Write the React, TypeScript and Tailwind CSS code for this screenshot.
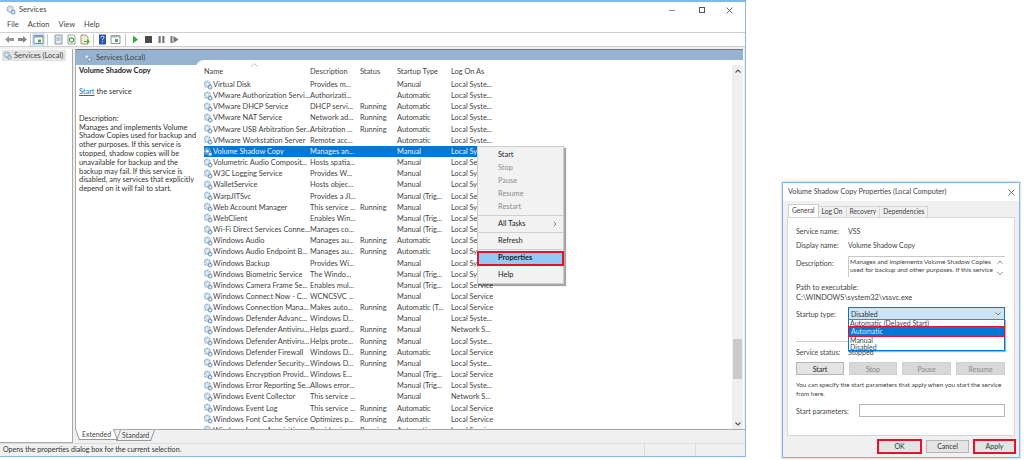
import React from "react";

const rows: [string, string, string, string, string][] = [
  ["Virtual Disk", "Provides m...", "", "Manual", "Local Syste..."],
  ["VMware Authorization Servi...", "Authorizati...", "", "Automatic", "Local Syste..."],
  ["VMware DHCP Service", "DHCP servi...", "Running", "Automatic", "Local Syste..."],
  ["VMware NAT Service", "Network ad...", "Running", "Automatic", "Local Syste..."],
  ["VMware USB Arbitration Ser...", "Arbitration ...", "Running", "Automatic", "Local Syste..."],
  ["VMware Workstation Server", "Remote acc...", "", "Automatic", "Local Syste..."],
  ["Volume Shadow Copy", "Manages an...", "", "Manual", "Local Syste..."],
  ["Volumetric Audio Composit...", "Hosts spatia...", "", "Manual", "Local Service"],
  ["W3C Logging Service", "Provides W...", "", "Manual", "Local Syste..."],
  ["WalletService", "Hosts objec...", "", "Manual", "Local Syste..."],
  ["WarpJITSvc", "Provides a JI...", "", "Manual (Trig...", "Local Service"],
  ["Web Account Manager", "This service ...", "Running", "Manual", "Local Syste..."],
  ["WebClient", "Enables Win...", "", "Manual (Trig...", "Local Service"],
  ["Wi-Fi Direct Services Conne...", "Manages co...", "", "Manual (Trig...", "Local Service"],
  ["Windows Audio", "Manages au...", "Running", "Automatic", "Local Service"],
  ["Windows Audio Endpoint B...", "Manages au...", "Running", "Automatic", "Local Syste..."],
  ["Windows Backup", "Provides Wi...", "", "Manual", "Local Syste..."],
  ["Windows Biometric Service", "The Windo...", "", "Manual (Trig...", "Local Syste..."],
  ["Windows Camera Frame Se...", "Enables mul...", "", "Manual (Trig...", "Local Service"],
  ["Windows Connect Now - C...", "WCNCSVC ...", "", "Manual", "Local Service"],
  ["Windows Connection Mana...", "Makes auto...", "Running", "Automatic (T...", "Local Service"],
  ["Windows Defender Advanc...", "Windows D...", "", "Manual", "Local Syste..."],
  ["Windows Defender Antiviru...", "Helps guard...", "Running", "Manual", "Network S..."],
  ["Windows Defender Antiviru...", "Helps prote...", "Running", "Manual", "Local Syste..."],
  ["Windows Defender Firewall", "Windows D...", "Running", "Automatic", "Local Service"],
  ["Windows Defender Security...", "Windows D...", "Running", "Manual", "Local Syste..."],
  ["Windows Encryption Provid...", "Windows E...", "", "Manual (Trig...", "Local Service"],
  ["Windows Error Reporting Se...", "Allows error...", "", "Manual (Trig...", "Local Syste..."],
  ["Windows Event Collector", "This service ...", "", "Manual", "Network S..."],
  ["Windows Event Log", "This service ...", "Running", "Automatic", "Local Service"],
  ["Windows Font Cache Service", "Optimizes p...", "Running", "Automatic", "Local Service"],
  ["Windows Image Acquisition...", "Provides im...", "Running", "Automatic", "Local Service"],
];

function Gear({ size = 10 }: { size?: number }) {
  return (
    <svg width={size} height={size} viewBox="0 0 12 12" className="shrink-0">
      <circle cx="5" cy="5" r="3.5" fill="none" stroke="#8fb2d0" strokeWidth="2" strokeDasharray="1.6 0.7" />
      <circle cx="5" cy="5" r="2" fill="#e6f0f8" stroke="#9db8cf" strokeWidth="0.6" />
      <circle cx="8.6" cy="8.6" r="2.3" fill="#cfe0ee" stroke="#5f86a8" strokeWidth="1" />
      <circle cx="8.6" cy="8.6" r="0.8" fill="#f3f7fa" />
    </svg>
  );
}

function ToolIcon({ children, active }: { children: React.ReactNode; active?: boolean }) {
  return (
    <div className={`w-[13px] h-[13px] flex items-center justify-center ${active ? "bg-[#cfe6f8]" : ""}`}>
      <svg width="11" height="11" viewBox="0 0 11 11">{children}</svg>
    </div>
  );
}

const Sep = ({ cls }: { cls: string }) => <div className={`w-px h-[12px] bg-[#c9c9c9] ${cls}`} />;
const MenuSep = () => (
  <div className="h-[4px] flex items-center"><div className="h-px w-full bg-[#d0d0d0]" /></div>
);

function MenuItem({ label, disabled }: { label: string; disabled?: boolean }) {
  return <div className={`h-[13px] leading-[13px] pl-[20px] ${disabled ? "text-[#8c8c8c]" : "text-[#222]"}`}>{label}</div>;
}

function DialogButton({ label, disabled, cls }: { label: string; disabled?: boolean; cls: string }) {
  return (
    <div className={`h-[13px] border flex items-center justify-center ${cls} ${disabled ? "bg-[#d8d8d8] border-[#d0d0d0] text-[#8a8a8a]" : "bg-[#e4e4e4] border-[#b5b5b5] text-[#222]"}`}>
      {label}
    </div>
  );
}

export default function App() {
  return (
    <div className="w-[1024px] h-[460px] bg-white flex items-start overflow-hidden text-[#333] font-['Lato','Noto_Sans',sans-serif]">
      {/* Services window */}
      <div className="relative w-[746px] h-[457px] shrink-0 flex flex-col border-t-2 border-r border-b border-[#7fb8ee] bg-white text-[7.4px]">
        <div className="h-[16px] flex items-center pl-[6px] shrink-0">
          <Gear size={10} />
          <span className="ml-[3px] text-[7.6px] text-[#444]">Services</span>
          <div className="ml-auto flex items-center text-[#555]">
            <div className="w-[6px] h-px bg-[#8a8a8a] mr-[24px]" />
            <div className="w-[6px] h-[6px] border border-[#555] mr-[21px]" />
            <svg width="7" height="7" viewBox="0 0 7 7" className="mr-[12px]"><path d="M.5.5l6 6M6.5.5l-6 6" stroke="#555" strokeWidth="0.9" /></svg>
          </div>
        </div>
        <div className="h-[14px] flex items-center gap-[9px] pl-[7px] text-[7.5px] text-[#444] shrink-0">
          <span>File</span><span>Action</span><span>View</span><span>Help</span>
        </div>
        <div className="h-[14px] flex items-center pl-[3px] border-t border-[#cfcfcf] shrink-0">
          <ToolIcon><path d="M1 5.5L5 2v2h5v3H5v2z" fill="#9a9a9a" /></ToolIcon>
          <ToolIcon><path d="M10 5.5L6 2v2H1v3h5v2z" fill="#8a8a8a" /></ToolIcon>
          <Sep cls="mx-[1px]" />
          <ToolIcon active><path d="M1 1.5h9v8H1z" fill="#fff" stroke="#7e8c99" /><path d="M1 1.5h9v2H1z" fill="#8aa0b3" /><path d="M5 5.5h3v3H5z" fill="#60a060" /></ToolIcon>
          <Sep cls="ml-[2px] mr-[4px]" />
          <ToolIcon><path d="M2 1h7v9H2z" fill="#e6edf3" stroke="#8a959f" /><path d="M3.5 3h4v4h-4z" fill="#bcc7d0" /></ToolIcon>
          <ToolIcon><path d="M2 1h6l1 1v8H2z" fill="#fff" stroke="#a0a0a0" /><circle cx="5.5" cy="6" r="2.2" fill="none" stroke="#4aa84a" strokeWidth="1.2" /></ToolIcon>
          <ToolIcon><path d="M2 1h5l2 2v7H2z" fill="#f3ecd0" stroke="#a09a80" /><path d="M5 7h3V5l3 2.5L8 10V8H5z" fill="#4caf3c" /></ToolIcon>
          <Sep cls="mx-[2px]" />
          <ToolIcon><path d="M2 .5h7v10H2z" fill="#2f55b5" /><path d="M4 3.5c0-1.6 3-1.6 3 0 0 1.2-1.5 1.2-1.5 2.6M5.5 7.3v1" fill="none" stroke="#fff" strokeWidth="0.9" /></ToolIcon>
          <ToolIcon><path d="M1 1.5h9v8H1z" fill="#fff" stroke="#8a959f" /><path d="M1 1.5h9v2H1z" fill="#a9b4bd" /><path d="M5 5h3v3H5z" fill="#60a060" /></ToolIcon>
          <Sep cls="ml-[3px] mr-[3px]" />
          <ToolIcon><path d="M3 1.5l5 4-5 4z" fill="#2fae3a" /></ToolIcon>
          <ToolIcon><path d="M2 2h7v7H2z" fill="#4a4a4a" /></ToolIcon>
          <ToolIcon><path d="M2.5 2h2.2v7H2.5zM6.3 2h2.2v7H6.3z" fill="#777" /></ToolIcon>
          <ToolIcon><path d="M1.5 2h2v7h-2zM4.5 2l5 3.5-5 3.5z" fill="#777" /></ToolIcon>
        </div>
        <div className="flex-1 min-h-0 flex border-t border-[#cfcfcf] bg-[#f0f0f0] pt-[2px]">
          {/* Tree */}
          <div className="w-[73px] shrink-0 bg-white border-r border-[#a9a9a9] border-b pl-[2px] pt-[1px] mr-[2px]">
            <div className="flex items-center h-[11px] bg-[#e4e4e4] w-[64px] pl-[1px] gap-[2px] text-[#444]">
              <Gear size={9} /><span>Services (Local)</span>
            </div>
          </div>
          {/* Main */}
          <div className="flex-1 min-w-0 flex flex-col">
            <div className="flex-1 min-h-0 flex flex-col bg-white border-l border-[#a9a9a9] mr-[1px] relative overflow-hidden">
              <div className="h-[16px] shrink-0 bg-[#97b3d2] border-t border-[#777] flex items-center pl-[7px] gap-[4px] text-[#444] mr-[1px]">
                <Gear size={9} /><span>Services (Local)</span>
              </div>
              <div className="flex-1 min-h-0 flex">
                <div className="w-[120px] shrink-0 pl-[3px] pt-[1px] text-[#333] leading-[8.8px] whitespace-nowrap">
                  <div className="font-bold h-[11px] mt-[1px] text-[#222]">Volume Shadow Copy</div>
                  <div className="mt-[10px]"><span className="text-[#1a6fc9] underline">Start</span> the service</div>
                  <div className="mt-[18px]">Description:</div>
                  <div>Manages and implements Volume<br />Shadow Copies used for backup and<br />other purposes. If this service is<br />stopped, shadow copies will be<br />unavailable for backup and the<br />backup may fail. If this service is<br />disabled, any services that explicitly<br />depend on it will fail to start.</div>
                </div>
                <div className="relative flex-1 min-w-0 -mt-[5px] bg-white rounded-tl-[8px] flex pl-[8px] overflow-hidden">
                  <div className="flex-1 min-w-0 overflow-hidden pt-[6px]">
                    <div className="grid grid-cols-[106px_50px_37px_54px_55px] h-[12px] items-center text-[#444] w-[302px] relative">
                      <span>Name</span><span>Description</span><span>Status</span><span>Startup Type</span><span>Log On As</span>
                      <svg width="7" height="4" viewBox="0 0 7 4" className="absolute left-[47px] -top-[3px]"><path d="M.5 3.5l3-3 3 3" fill="none" stroke="#aaa" strokeWidth="0.8" /></svg>
                    </div>
                    <div className="mt-[1px]">
                      {rows.map((r, i) => {
                        const sel = i === 6;
                        return (
                          <div key={i} className={`grid grid-cols-[106px_50px_37px_54px_55px] h-[11.17px] items-center w-[302px] whitespace-nowrap ${sel ? "bg-[#0078d7] text-[#eaf3fb]" : "text-[#444]"}`}>
                            <span className="flex items-center -ml-[1px]"><Gear size={10} /><span>{r[0]}</span></span>
                            <span>{r[1]}</span><span>{r[2]}</span><span>{r[3]}</span><span>{r[4]}</span>
                          </div>
                        );
                      })}
                    </div>
                  </div>
                  {/* Scrollbar */}
                  <div className="w-[11px] shrink-0 bg-[#efefef] flex flex-col items-center mr-[1px] mt-[5px]">
                    <svg width="6" height="4" viewBox="0 0 6 4" className="mt-[4px]"><path d="M.5 3.5L3 1l2.5 2.5" fill="none" stroke="#555" strokeWidth="1.1" /></svg>
                    <div className="mt-auto w-[9px] h-[40px] bg-[#cbcbcb] mb-[43px]" />
                    <svg width="6" height="4" viewBox="0 0 6 4" className="mb-[3px]"><path d="M.5.5L3 3 5.5.5" fill="none" stroke="#555" strokeWidth="1.1" /></svg>
                  </div>
                </div>
              </div>
            </div>
            {/* Tabs */}
            <div className="h-[14px] shrink-0 border-t border-[#a9a9a9] flex items-start pl-[2px] text-[#444] bg-[#f0f0f0] text-[7px]">
              <div className="h-[11px] px-[4px] bg-white -mt-px skew-x-[20deg] border-l border-r border-b border-[#999] leading-[11px]"><div className="-skew-x-[20deg]">Extended</div></div>
              <div className="h-[11px] px-[3px] ml-[2px] -skew-x-[20deg] border-r border-l border-b border-[#999] leading-[11px]"><div className="skew-x-[20deg]">Standard</div></div>
            </div>
          </div>
        </div>
        {/* Status bar */}
        <div className="h-[13px] shrink-0 flex items-stretch bg-[#f0f0f0] border-t border-[#dcdcdc] text-[#333] text-[7.1px]">
          <div className="flex-1 flex items-center pl-[3px]">Opens the properties dialog box for the current selection.</div>
          <div className="w-[51px] border-l border-[#dcdcdc]" />
          <div className="w-[50px] border-l border-[#dcdcdc]" />
        </div>

        {/* Context menu */}
        <div className="absolute left-[477px] top-[144px] w-[87px] h-[138px] bg-[#f2f2f2] border border-[#cdcdcd] shadow-[2px_2px_1px_rgba(0,0,0,0.35)] pt-[1px]">
          <MenuItem label="Start" />
          <MenuItem label="Stop" disabled />
          <MenuItem label="Pause" disabled />
          <MenuItem label="Resume" disabled />
          <MenuItem label="Restart" disabled />
          <MenuSep />
          <div className="relative"><MenuItem label="All Tasks" /><svg width="4" height="6" viewBox="0 0 4 6" className="absolute right-[6px] top-[4px]"><path d="M.7.7L3 3 .7 5.3" fill="none" stroke="#555" strokeWidth="0.8" /></svg></div>
          <MenuSep />
          <MenuItem label="Refresh" />
          <MenuSep />
          <div className="h-[15px] leading-[10px] pl-[19px] bg-[#91c9f7] border-[2px] border-[#e8112d] -ml-px w-[87px] text-[#222] font-bold">Properties</div>
          <div className="mt-[2px]"><MenuItem label="Help" /></div>
        </div>
      </div>

      {/* Dialog */}
      <div className="ml-[36px] mt-[182px] w-[238px] h-[276px] shrink-0 flex flex-col bg-[#f0f0f0] border border-[#7fb8ee] shadow-[0_0_2px_rgba(0,0,0,0.35)] text-[7px] text-[#444]">
        <div className="h-[18px] shrink-0 bg-white flex items-center pl-[5px] pr-[4px] text-[7.2px] text-[#444]">
          <span>Volume Shadow Copy Properties (Local Computer)</span>
          <svg width="7" height="7" viewBox="0 0 7 7" className="ml-auto"><path d="M.5.5l6 6M6.5.5l-6 6" stroke="#555" strokeWidth="0.8" /></svg>
        </div>
        <div className="h-[16px] shrink-0 flex items-end pl-[5px] text-[6.6px]">
          <div className="h-[13px] px-[3px] flex items-center bg-white border border-b-0 border-[#cfcfcf]">General</div>
          <div className="h-[11px] px-[3px] flex items-center border-t border-r border-[#d5d5d5]">Log On</div>
          <div className="h-[11px] px-[3px] flex items-center border-t border-r border-[#d5d5d5]">Recovery</div>
          <div className="h-[11px] px-[3px] flex items-center border-t border-r border-[#d5d5d5]">Dependencies</div>
        </div>
        <div className="h-[219px] shrink-0 mx-[4px] bg-white border border-[#d5d5d5] px-[8px] pt-[6px]">
          <div className="flex h-[14px] items-center"><span className="w-[52px]">Service name:</span><span>VSS</span></div>
          <div className="flex h-[14px] items-center"><span className="w-[52px]">Display name:</span><span>Volume Shadow Copy</span></div>
          <div className="flex items-start mt-[4px]">
            <span className="w-[52px] pt-[2px]">Description:</span>
            <div className="relative w-[157px] h-[21px] border-t border-l border-[#c8c8c8] text-[6.5px] leading-[8px] pl-[1px] pt-[1px] overflow-hidden whitespace-nowrap">
              <div>Manages and implements Volume Shadow Copies<br />used for backup and other purposes. If this service</div>
              <svg width="6" height="16" viewBox="0 0 6 16" className="absolute right-[2px] top-[3px]"><path d="M.5 3.5L3 1l2.5 2.5M.5 12L3 14.5 5.5 12" fill="none" stroke="#666" strokeWidth="0.8" /></svg>
            </div>
          </div>
          <div className="mt-[6px] leading-[9.7px] text-[7.4px]">Path to executable:<br />C:\WINDOWS\system32\vssvc.exe</div>
          <div className="relative flex h-[13px] items-center mt-[5px]">
            <span className="w-[52px]">Startup type:</span>
            <div className="w-[157px] h-[13px] bg-[#cce4f7] border border-[#0078d7] flex items-center pl-[2px] text-[#333]">Disabled
              <svg width="6" height="4" viewBox="0 0 6 4" className="ml-auto mr-[3px]"><path d="M.5.5L3 3 5.5.5" fill="none" stroke="#666" strokeWidth="0.8" /></svg>
            </div>
            <div className="absolute left-[52px] top-[12px] w-[157px] h-[32px] bg-white border border-[#0078d7] border-t-[#777] leading-[7px] text-[#444] z-10 shadow-[1px_1px_1px_rgba(0,0,0,0.3)]">
              <div className="pl-[1px] h-[6px] overflow-hidden">Automatic (Delayed Start)</div>
              <div className="pl-[2px] -mx-[1px] h-[11px] w-[157px] bg-[#0078d7] text-[#dcecf9] border-[1.5px] border-[#e8112d] flex items-center">Automatic</div>
              <div className="pl-[1px] h-[7px]">Manual</div>
              <div className="pl-[1px] h-[7px]">Disabled</div>
            </div>
          </div>
          <div className="h-px bg-[#cfcfcf] mt-[21px] w-[209px]" />
          <div className="flex h-[10px] items-center mt-[5px]"><span className="w-[52px]">Service status:</span><span>Stopped</span></div>
          <div className="flex mt-[5px] gap-[5px]">
            <DialogButton label="Start" cls="w-[48px]" />
            <DialogButton label="Stop" disabled cls="w-[48px]" />
            <DialogButton label="Pause" disabled cls="w-[49px]" />
            <DialogButton label="Resume" disabled cls="w-[49px]" />
          </div>
          <div className="mt-[6px] leading-[8.5px] w-[215px] whitespace-nowrap text-[6.35px]">You can specify the start parameters that apply when you start the service<br />from here.</div>
          <div className="flex items-center h-[13px] mt-[6px]">
            <span className="w-[63px]">Start parameters:</span>
            <div className="w-[146px] h-[13px] bg-white border border-[#b5b5b5]" />
          </div>
        </div>
        <div className="flex-1 flex items-center justify-end pr-[3px] gap-[4px] text-[#333]">
          <div className="w-[45px] h-[15px] border-2 border-[#e8112d] bg-[#e4e4e4] flex items-center justify-center">OK</div>
          <div className="w-[43px] h-[13px] bg-[#e4e4e4] border border-[#b5b5b5] flex items-center justify-center">Cancel</div>
          <div className="w-[43px] h-[15px] border-2 border-[#e8112d] bg-[#e4e4e4] flex items-center justify-center">Apply</div>
        </div>
      </div>
    </div>
  );
}
